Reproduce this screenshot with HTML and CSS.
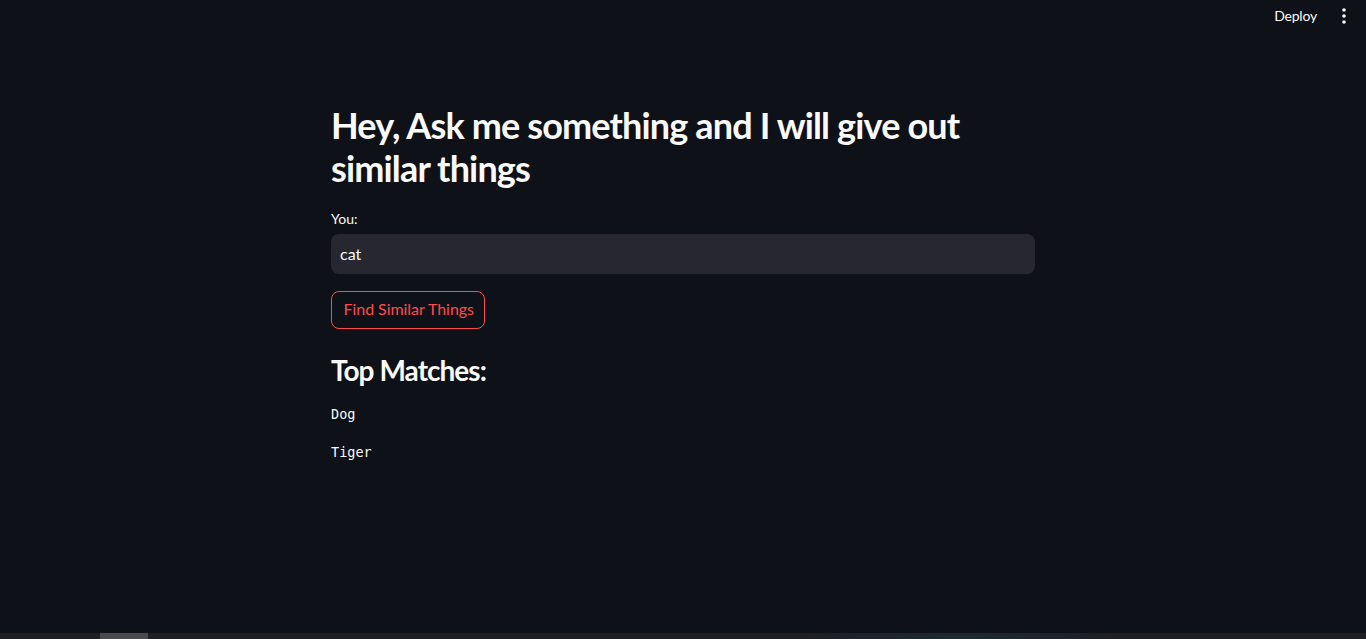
FILE: index.html
```html
<!DOCTYPE html>
<html lang="en">
<head>
<meta charset="utf-8">
<title>Similar Things</title>
<link rel="stylesheet" href="styles.css">
</head>
<body>
<header class="topbar">
  <span class="deploy">Deploy</span>
  <span class="menu" aria-label="menu">
    <svg width="4" height="16" viewBox="0 0 4 16"><circle cx="2" cy="2" r="1.8" fill="#fafafa"/><circle cx="2" cy="8" r="1.8" fill="#fafafa"/><circle cx="2" cy="14" r="1.8" fill="#fafafa"/></svg>
  </span>
</header>
<main class="container">
  <h1 class="title">Hey, Ask me something and I will give out similar things</h1>
  <label class="label" for="q">You:</label>
  <div class="input">cat</div>
  <button class="btn">Find Similar Things</button>
  <h3 class="subtitle">Top Matches:</h3>
  <div class="result">Dog</div>
  <div class="result">Tiger</div>
</main>
<div class="hscroll"><div class="thumb"></div></div>
</body>
</html>
```

FILE: styles.css
```css
html, body {
  margin: 0;
  padding: 0;
  background: #0e1117;
  color: #fafafa;
  font-family: Lato, "Liberation Sans", sans-serif;
  height: 100%;
  overflow: hidden;
}
.topbar {
  height: 31px;
  display: flex;
  align-items: center;
  justify-content: flex-end;
  gap: 25px;
  padding-right: 20px;
}
.deploy {
  font-size: 14px;
  color: #fafafa;
  letter-spacing: -0.2px;
}
.menu {
  display: flex;
  align-items: center;
  padding-top: 1px;
}
.container {
  width: 704px;
  margin: 0 auto;
  padding-top: 73px;
  display: flex;
  flex-direction: column;
  align-items: flex-start;
}
.title {
  margin: 0;
  font-size: 36px;
  line-height: 43px;
  font-weight: 700;
  letter-spacing: -0.85px;
}
.label {
  margin-top: 19px;
  font-size: 14px;
  line-height: 20px;
}
.input {
  margin-top: 5px;
  box-sizing: border-box;
  width: 100%;
  height: 40px;
  background: #262730;
  border-radius: 8px;
  padding: 0 9px;
  font-size: 16px;
  line-height: 40px;
}
.btn {
  margin-top: 17px;
  box-sizing: border-box;
  height: 38px;
  padding: 0 10.5px 3px 11.5px;
  background: #0e1117;
  border: 1px solid #ff4b4b;
  border-radius: 8px;
  color: #ff4b4b;
  font-family: inherit;
  font-size: 16px;
  letter-spacing: -0.05px;
}
.subtitle {
  margin: 24px 0 0;
  font-size: 28px;
  line-height: 34px;
  font-weight: 700;
  letter-spacing: -0.95px;
}
.result {
  font-family: "DejaVu Sans Mono", "Liberation Mono", monospace;
  font-size: 13.5px;
  line-height: 21px;
}
.subtitle + .result { margin-top: 17px; }
.result + .result { margin-top: 17px; }
.hscroll {
  position: fixed;
  left: 0;
  right: 0;
  bottom: 0;
  height: 6px;
  background: radial-gradient(ellipse 160px 20px at 960px 6px, #1d2b30, transparent), #1e1f22;
}
.thumb {
  margin-left: 100px;
  width: 48px;
  height: 6px;
  background: #4a4a4c;
}
```
